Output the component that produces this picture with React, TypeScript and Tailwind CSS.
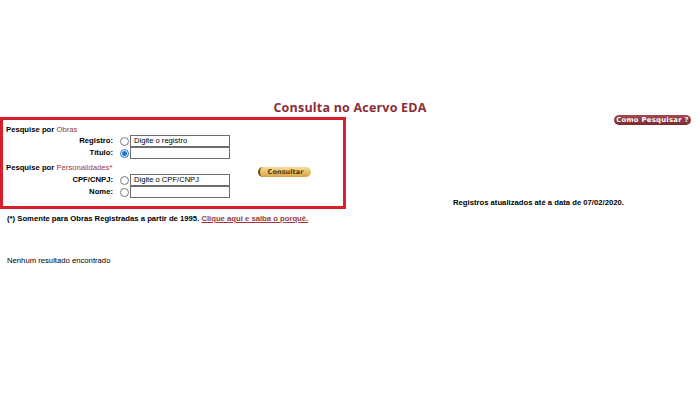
import React from "react";

const Radio = ({ checked = false }: { checked?: boolean }) => (
  <span
    className={
      checked
        ? "flex h-[9px] w-[9px] items-center justify-center rounded-full border border-[#1b73d3] bg-white"
        : "flex h-[9px] w-[9px] items-center justify-center rounded-full border border-[#7a7a7a] bg-white"
    }
  >
    {checked && <span className="h-[5px] w-[5px] rounded-full bg-[#1b73d3]" />}
  </span>
);

const Row = ({ label, placeholder, checked }: { label: string; placeholder?: string; checked?: boolean }) => (
  <div className="flex h-[12px] items-center">
    <span className="w-[110px] text-right font-bold">{label}</span>
    <span className="ml-[7px]">
      <Radio checked={checked} />
    </span>
    <div className="ml-[1px] flex h-[12px] w-[100px] items-center border border-[#6d6d6d] bg-white px-[3px] text-[7.6px] leading-none">
      {placeholder}
    </div>
  </div>
);

export default function App() {
  return (
    <div className="relative h-[400px] w-[700px] bg-white font-['Liberation_Sans',Arial,sans-serif] text-[7.7px] text-black">
      {/* Title */}
      <div className="flex h-[117px] items-end justify-center pb-[1px]">
        <h1 className="font-['Open_Sans',sans-serif] text-[12.5px] leading-[16px] font-bold tracking-[0.2px] text-[#8a2e37]">
          Consulta no Acervo EDA
        </h1>
      </div>

      <div className="flex">
        {/* Search form */}
        <div className="flex h-[92px] w-[346px] border-[3.5px] border-[#d81e2b]">
          <div className="flex flex-col">
            <div className="flex h-[15px] items-end pl-[3px] leading-[10px]">
              <span className="font-bold">Pesquise por&nbsp;</span>
              <span className="text-[#9b3a40]">Obras</span>
            </div>
            <Row label="Registro:" placeholder="Digite o registro" />
            <Row label="Título:" checked />
            <div className="mt-[3px] flex h-[12px] items-center pl-[3px]">
              <span className="font-bold">Pesquise por&nbsp;</span>
              <span className="text-[#9b3a40]">Personalidades*</span>
            </div>
            <Row label="CPF/CNPJ:" placeholder="Digite o CPF/CNPJ" />
            <Row label="Nome:" />
          </div>
          <button className="mt-[47px] ml-[28px] flex h-[10px] w-[53px] items-center justify-center self-start rounded-full border-l-[2px] border-[#6b4a14] bg-gradient-to-b from-[#f7dc97] to-[#d9a440] font-['DejaVu_Sans',sans-serif] text-[6.6px] leading-none font-bold text-[#5a3a0c]">
            Consultar
          </button>
        </div>

        {/* Right side */}
        <div className="flex flex-1 flex-col">
          <div className="mt-[-2px] flex justify-end pr-[9px]">
            <button className="flex h-[10px] w-[77px] items-center justify-center rounded-full bg-gradient-to-b from-[#a34950] to-[#7a2a30] font-['DejaVu_Sans',sans-serif] text-[6.8px] leading-none font-bold tracking-[0.3px] text-white">
              Como Pesquisar ?
            </button>
          </div>
          <div className="mt-auto mb-[1px] pl-[107px] leading-[10px] font-bold">
            Registros atualizados até a data de 07/02/2020.
          </div>
        </div>
      </div>

      <p className="mt-[4px] h-[12px] pl-[7px] leading-[12px] font-bold">
        (*) Somente para Obras Registradas a partir de 1995.{" "}
        <a href="#" className="text-[#9b3a40] underline">
          Clique aqui e saiba o porquê.
        </a>
      </p>

      <p className="mt-[30px] pl-[7px] leading-[12px]">Nenhum resultado encontrado</p>
    </div>
  );
}
